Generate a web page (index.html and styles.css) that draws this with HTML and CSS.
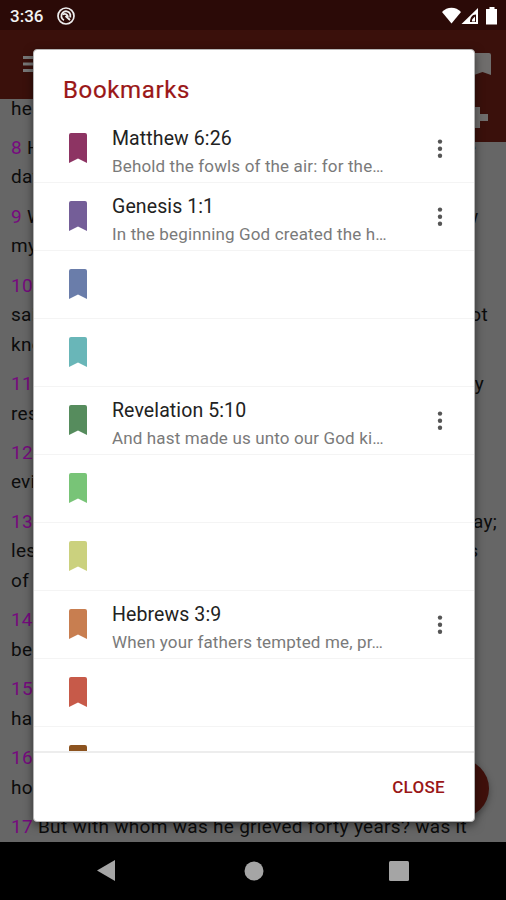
FILE: index.html
```html
<!DOCTYPE html>
<html lang="en">
<head>
<meta charset="utf-8">
<title>Bookmarks</title>
<link rel="stylesheet" href="styles.css">
</head>
<body>
<svg class="defs" width="0" height="0">
  <symbol id="mark" viewBox="0 0 18 30"><path d="M2 0h14a2 2 0 0 1 2 2v28l-9-4.500-9 4.500V2a2 2 0 0 1 2-2z"/></symbol>
  <symbol id="more" viewBox="0 0 6 20"><circle cx="3" cy="2.6" r="2.2"/><circle cx="3" cy="9.7" r="2.2"/><circle cx="3" cy="16.8" r="2.2"/></symbol>
</svg>
<div class="phone">
  <header class="status">
    <span class="clock">3:36</span>
    <svg class="sync" viewBox="0 0 20 20" width="20" height="20" fill="none" stroke="#eee"><circle cx="10" cy="10" r="8" stroke-width="1.700"/><path d="M8 14.200A4.700 4.700 0 1 1 14.300 8" stroke-width="1.800"/><path d="M14.300 8v3.500M6.500 8.500c3-1.500 5 0 5.500 2.500M9.500 10l4.500 4" stroke-width="1.800"/></svg>
    <svg class="signals" viewBox="0 0 58 20" width="58" height="20" fill="#fff"><path d="M1 6C6 .3 15 .3 20 6L10.500 17.500z"/><path fill-rule="evenodd" d="M20.500 18L37 2v16zM29 16h6V8.500c-4 0-6 3.500-6 7.500z"/><path d="M31 13.500l3-3v5h-3z"/><path d="M46 3h2.500V1h5v2H56v15.500H45V3z"/></svg>
  </header>
  <div class="toolbar">
    <svg width="24" height="18" viewBox="0 0 24 18" fill="#777"><path d="M0 0h24v3H0zM0 6.500h24v3H0zM0 13h24v3H0z"/></svg>
    <svg class="tool-mark" width="17" height="24" viewBox="0 0 17 24" fill="#6f6d6c"><path d="M0 0h15q2 0 2 2v20l-8.500-3L0 22z"/></svg>
  </div>
  <main class="reader">
    <div class="verse"><p>hear his voice,</p></div>
    <div class="verse"><p><b>8</b> Harden not your hearts, as in the provocation, in the</p><p>day of temptation in the wilderness:</p></div>
    <div class="verse"><p><b>9</b> When your fathers tempted me, proved me, and saw</p><p>my works forty years.</p></div>
    <div class="verse"><p><b>10</b> Wherefore I was grieved with that generation, and</p><p>said, They do alway err in their heart; and they have not</p><p>known my ways.</p></div>
    <div class="verse"><p><b>11</b> So I sware in my wrath, They shall not enter into my</p><p>rest.)</p></div>
    <div class="verse"><p><b>12</b> Take heed, brethren, lest there be in any of you an</p><p class="snug">evil heart of unbelief, in departing from the living God.</p></div>
    <div class="verse"><p><b>13</b> But exhort one another daily, while it is called To day;</p><p>lest any of you be hardened through the deceitfulness</p><p>of sin.</p></div>
    <div class="verse"><p class="snug"><b>14</b> For we are made partakers of Christ, if we hold the</p><p>beginning of our confidence stedfast unto the end;</p></div>
    <div class="verse"><p><b>15</b> While it is said, To day if ye will hear his voice,</p><p>harden not your hearts, as in the provocation.</p></div>
    <div class="verse"><p><b>16</b> For some, when they had heard, did provoke:</p><p>howbeit not all that came out of Egypt by Moses.</p></div>
    <div class="verse"><p><b>17</b> But with whom was he grieved forty years? was it</p></div>
  </main>
  <nav class="navbar">
    <svg width="18" height="22" viewBox="0 0 18 22" fill="#a5a5a5"><path d="M18 0v21L0 10.500z"/></svg>
    <svg class="home" width="20" height="20" viewBox="0 0 20 20" fill="#a5a5a5"><circle cx="10" cy="10" r="9.500"/></svg>
    <svg width="20" height="20" viewBox="0 0 20 20" fill="#a5a5a5"><rect width="20" height="20" rx="1.500"/></svg>
  </nav>
  <div class="tab"><svg width="14" height="22" viewBox="0 0 14 22" fill="#6f6d6c"><path d="M0 0h6v7h8v7H6v7H0z"/></svg></div>
  <div class="fab"></div>
  <section class="dialog">
    <h1>Bookmarks</h1>
    <ul class="list">
      <li><svg class="mark plum"><use href="#mark"/></svg><div class="entry"><h2>Matthew 6:26</h2><p>Behold the fowls of the air: for the…</p></div><svg class="more"><use href="#more"/></svg></li>
      <li><svg class="mark violet"><use href="#mark"/></svg><div class="entry"><h2>Genesis 1:1</h2><p>In the beginning God created the h…</p></div><svg class="more"><use href="#more"/></svg></li>
      <li><svg class="mark blue"><use href="#mark"/></svg></li>
      <li><svg class="mark teal"><use href="#mark"/></svg></li>
      <li><svg class="mark forest"><use href="#mark"/></svg><div class="entry"><h2>Revelation 5:10</h2><p>And hast made us unto our God ki…</p></div><svg class="more"><use href="#more"/></svg></li>
      <li><svg class="mark green"><use href="#mark"/></svg></li>
      <li><svg class="mark lime"><use href="#mark"/></svg></li>
      <li><svg class="mark orange"><use href="#mark"/></svg><div class="entry"><h2>Hebrews 3:9</h2><p>When your fathers tempted me, pr…</p></div><svg class="more"><use href="#more"/></svg></li>
      <li><svg class="mark red"><use href="#mark"/></svg></li>
      <li><svg class="mark brown"><use href="#mark"/></svg></li>
    </ul>
    <footer><button>CLOSE</button></footer>
  </section>
</div>
</body>
</html>
```
FILE: styles.css
```css
* { box-sizing: border-box; margin: 0; padding: 0; }
body { font-family: Roboto, "Liberation Sans", sans-serif; background: #000; }
.defs { display: none; }
svg { display: block; flex: none; }
.phone { position: relative; width: 506px; height: 900px; overflow: hidden; display: flex; flex-direction: column; background: #666; }
.status { height: 30px; flex: none; display: flex; align-items: center; padding: 1px 7px 0 10px; background: #2b0a07; }
.clock { width: 46px; color: #f2f2f2; font-size: 17px; font-weight: 500; line-height: 30px; }
.signals { margin-left: auto; }
.toolbar { height: 69px; flex: none; display: flex; justify-content: space-between; align-items: flex-start; padding: 26px 15px 0 23px; background: #3a100b; }
.tool-mark { margin-top: -3px; }
.reader { height: 743px; overflow: hidden; padding: 0 11px; color: #0c0c0c; font-size: 19px; letter-spacing: 0.3px; white-space: nowrap; }
.verse { padding-bottom: 10px; }
.verse:first-child { margin-top: -5.5px; }
.verse p { line-height: 29.45px; }
.verse .snug { letter-spacing: 0.15px; }
.verse b { font-weight: 400; color: #760b7e; }
.navbar { height: 58px; flex: none; display: flex; justify-content: space-between; align-items: center; padding: 0 97px; background: #000; }
.home { margin-left: 3px; }
.tab { position: absolute; top: 99px; left: 474px; width: 32px; height: 43px; padding-top: 8px; background: #3a100b; }
.fab { position: absolute; left: 430px; top: 759px; width: 59px; height: 59px; border-radius: 50%; background: #3f100b; box-shadow: 0 3px 7px rgba(0,0,0,.35); }
.dialog { position: absolute; left: 33px; top: 49px; width: 442px; height: 773px; display: flex; flex-direction: column; background: #fff; border: 1px solid #b5b5b5; border-radius: 4px; box-shadow: 0 3px 10px rgba(0,0,0,.5); overflow: hidden; }
.dialog h1 { height: 65px; flex: none; padding: 25px 0 0 29px; color: #9a1717; font-size: 24px; line-height: 31px; font-weight: 400; letter-spacing: 0.65px; -webkit-text-stroke: 0.2px #9a1717; }
.list { height: 638px; flex: none; overflow: hidden; list-style: none; border-bottom: 2px solid #ededed; }
.list li { height: 68px; display: flex; align-items: flex-start; padding: 18px 31px 0 35px; border-bottom: 1px solid #f4f4f4; }
.mark { width: 18px; height: 30px; margin: 0 25px 0 0; }
.entry { flex: 1; margin-top: -7px; }
.entry h2 { font-size: 19.5px; line-height: 26px; font-weight: 400; letter-spacing: 0.1px; color: #222; }
.entry p { font-size: 17px; line-height: 26px; margin-top: 1px; letter-spacing: 0.14px; color: #7a7a7a; white-space: nowrap; }
.more { width: 6px; height: 20px; margin-top: 6px; fill: #555; }
.plum { fill: #8d3463; }
.violet { fill: #745e98; }
.blue { fill: #6a7daa; }
.teal { fill: #69b6b8; }
.forest { fill: #568c5d; }
.green { fill: #78c477; }
.lime { fill: #cbd17e; }
.orange { fill: #c87e50; }
.red { fill: #c75a49; }
.brown { fill: #8c531f; }
footer { flex: 1; display: flex; justify-content: flex-end; align-items: center; padding-right: 29px; }
button { border: 0; background: none; font: 500 17px Roboto, sans-serif; letter-spacing: 0.3px; color: #9a1717; }
```
